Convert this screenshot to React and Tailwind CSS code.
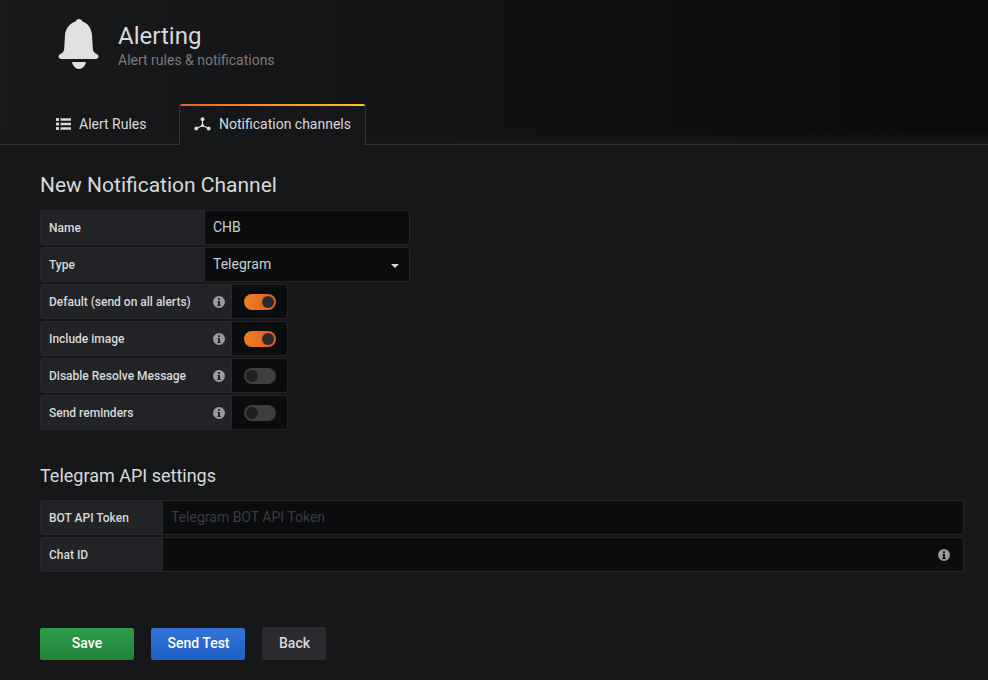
const Info = () => (
  <svg viewBox="0 0 24 24" className="w-[12px] h-[12px]" fill="#9a9b9d">
    <path fillRule="evenodd" d="M12 0a12 12 0 1 0 0 24 12 12 0 0 0 0-24zM10 4.500h4v3.500h-4zM9 10h5v8h1.500v2h-7v-2H10v-6H9z" />
  </svg>
);

const Toggle = ({ on }) => (
  <div className={on
    ? "w-[32px] h-[16px] rounded-full flex items-center justify-end pr-[2px] bg-gradient-to-r from-[#f0801f] to-[#df5a25]"
    : "w-[32px] h-[16px] rounded-full flex items-center justify-start pl-[2px] bg-[#3d3e40]"}>
    <div className={on ? "w-[12px] h-[12px] rounded-full bg-[#2a2b2d]" : "w-[12px] h-[12px] rounded-full bg-[#1e1f21]"} />
  </div>
);

const Label = ({ w, children }) => (
  <div className={`${w} h-full bg-[#212327] border border-[#26282b] rounded-l-[3px] flex items-center pl-[8px] text-[12px] font-medium text-[#d8d9da] shrink-0`}>
    <span>{children}</span>
  </div>
);

const ToggleRow = ({ label, on }) => (
  <div className="flex h-[35px] w-[248px]">
    <div className="w-[192px] h-full bg-[#212327] border border-[#26282b] rounded-l-[3px] flex items-center justify-between pl-[8px] pr-[6px] text-[12px] font-medium text-[#d8d9da] shrink-0">
      <span>{label}</span>
      <Info />
    </div>
    <div className="w-[56px] h-full bg-[#0b0c0e] border border-[#212327] border-l-0 rounded-r-[3px] flex items-center justify-center">
      <Toggle on={on} />
    </div>
  </div>
);

const Tab = ({ active, icon, children }) => (
  <div className={active
    ? "relative h-[41px] w-[187px] bg-[#161719] border-x border-[#333538] flex items-center pl-[14px] gap-[8px] text-[14px] text-[#d8d9da] -mb-px rounded-t-[3px] overflow-hidden"
    : "h-[40px] w-[124px] flex items-center pl-[16px] gap-[8px] text-[14px] text-[#d8d9da]"}>
    {active && <div className="absolute top-0 -left-px -right-px h-[2px] bg-gradient-to-r from-[#f05a28] to-[#fbca0a]" />}
    {icon}
    <span>{children}</span>
  </div>
);

export default function App() {
  return (
    <div className="w-[988px] h-[680px] overflow-hidden bg-[#161719] text-[#d8d9da]" style={{ fontFamily: "Roboto, sans-serif" }}>
      <header className="h-[145px] border-b border-[#333538] bg-gradient-to-r from-[#18191b] to-[#0b0b0b] relative flex flex-col">
        <div className="absolute left-0 right-0 bottom-0 h-[12px] bg-gradient-to-b from-transparent to-[#161719]" />
        <div className="relative flex pl-[58px] pt-[18px] h-[104px]">
          <svg width="42" height="52" viewBox="0 0 42 52" fill="#e0e0e0" className="shrink-0">
            <path d="M21 1c1.700 0 3 1 3.400 2.500C29.500 5 33.500 10 34 17l.8 13.500c.2 2.300.7 3.500 2.900 5 2 1.300 2.800 1.800 2.800 3 0 1.500-1.200 2.500-2.800 2.500H3.300c-1.600 0-2.800-1-2.800-2.500 0-1.200.8-1.700 2.800-3 2.200-1.500 2.700-2.700 2.900-5L7 17C7.500 10 12.500 5 17.600 3.500 18 2 19.300 1 21 1z" />
            <path d="M14 44h14c-.6 3.600-3.500 7-7 7s-6.400-3.400-7-7z" />
          </svg>
          <div className="ml-[18px]">
            <div className="text-[24px] leading-[36px] text-[#d8d9da]">Alerting</div>
            <div className="text-[14px] leading-[16px] -mt-[2px] text-[#7b7b7b]">Alert rules &amp; notifications</div>
          </div>
        </div>
        <div className="relative flex pl-[40px] mt-auto items-end">
          <Tab icon={
            <svg width="15" height="14" viewBox="0 0 15 14" fill="#d8d9da">
              <rect x="0" y="1" width="3" height="3" rx=".5" /><rect x="0" y="5.500" width="3" height="3" rx=".5" /><rect x="0" y="10" width="3" height="3" rx=".5" />
              <rect x="4.500" y="1.300" width="10.500" height="2.400" /><rect x="4.500" y="5.800" width="10.500" height="2.400" /><rect x="4.500" y="10.300" width="10.500" height="2.400" />
            </svg>
          }>Alert Rules</Tab>
          <div className="w-[15px]" />
          <Tab active icon={
            <svg width="17" height="16" viewBox="0 0 17 16" fill="#d8d9da">
              <path d="M8.500 2V8.500M8.500 8.500L2.300 11.500M8.500 8.500l6.200 3" strokeWidth="1.200" stroke="#d8d9da" fill="none" />
              <circle cx="8.500" cy="2.200" r="1.900" /><circle cx="8.500" cy="8.500" r="1.600" /><circle cx="2.300" cy="11.500" r="1.900" /><circle cx="14.700" cy="11.500" r="1.900" />
            </svg>
          }>Notification channels</Tab>
        </div>
      </header>

      <main className="px-[40px]">
        <h3 className="text-[21px] leading-[24px] mt-[28px] mb-[13px] text-[#d8d9da]">New Notification Channel</h3>
        <div className="flex flex-col gap-[2px]">
          <div className="flex h-[35px] w-[370px]">
            <Label w="w-[165px]">Name</Label>
            <div className="flex-1 bg-[#0b0c0e] border border-[#212327] border-l-0 rounded-r-[3px] flex items-center pl-[8px] text-[14px] text-[#c7d0d9]">CHB</div>
          </div>
          <div className="flex h-[35px] w-[370px]">
            <Label w="w-[165px]">Type</Label>
            <div className="flex-1 bg-[#0b0c0e] border border-[#212327] border-l-0 rounded-r-[3px] flex items-center justify-between pl-[8px] pr-[10px] text-[14px] text-[#c7d0d9]">
              <span>Telegram</span>
              <div className="w-0 h-0 mt-[2px] border-x-[4px] border-x-transparent border-t-[4px] border-t-[#d8d9da]" />
            </div>
          </div>
          <ToggleRow label="Default (send on all alerts)" on />
          <ToggleRow label="Include image" on />
          <ToggleRow label="Disable Resolve Message" />
          <ToggleRow label="Send reminders" />
        </div>

        <h3 className="text-[18px] leading-[22px] mt-[35px] mb-[13px] text-[#d8d9da]">Telegram API settings</h3>
        <div className="flex flex-col gap-[2px] w-[924px]">
          <div className="flex h-[35px]">
            <Label w="w-[123px]">BOT API Token</Label>
            <div className="flex-1 bg-[#0b0c0e] border border-[#212327] border-l-0 rounded-r-[3px] flex items-center pl-[8px] text-[14px] text-[#3a3c41]">Telegram BOT API Token</div>
          </div>
          <div className="flex h-[35px]">
            <Label w="w-[123px]">Chat ID</Label>
            <div className="flex-1 bg-[#0b0c0e] border border-[#212327] border-l-0 rounded-r-[3px] flex items-center justify-end pr-[13px]"><Info /></div>
          </div>
        </div>

        <div className="flex items-center mt-[55px] text-[14px] font-medium">
          <div className="w-[94px] h-[32px] rounded-[2px] bg-gradient-to-b from-[#2c9d4b] to-[#228238] text-white flex items-center justify-center">Save</div>
          <div className="ml-[17px] w-[94px] h-[32px] pl-px rounded-[2px] bg-gradient-to-b from-[#3274d9] to-[#1f60c4] text-white flex items-center justify-center">Send Test</div>
          <div className="ml-[17px] w-[64px] h-[33px] pl-px rounded-[2px] bg-[#2a2b2e] text-[#d8d9da] flex items-center justify-center">Back</div>
        </div>
      </main>
    </div>
  );
}
